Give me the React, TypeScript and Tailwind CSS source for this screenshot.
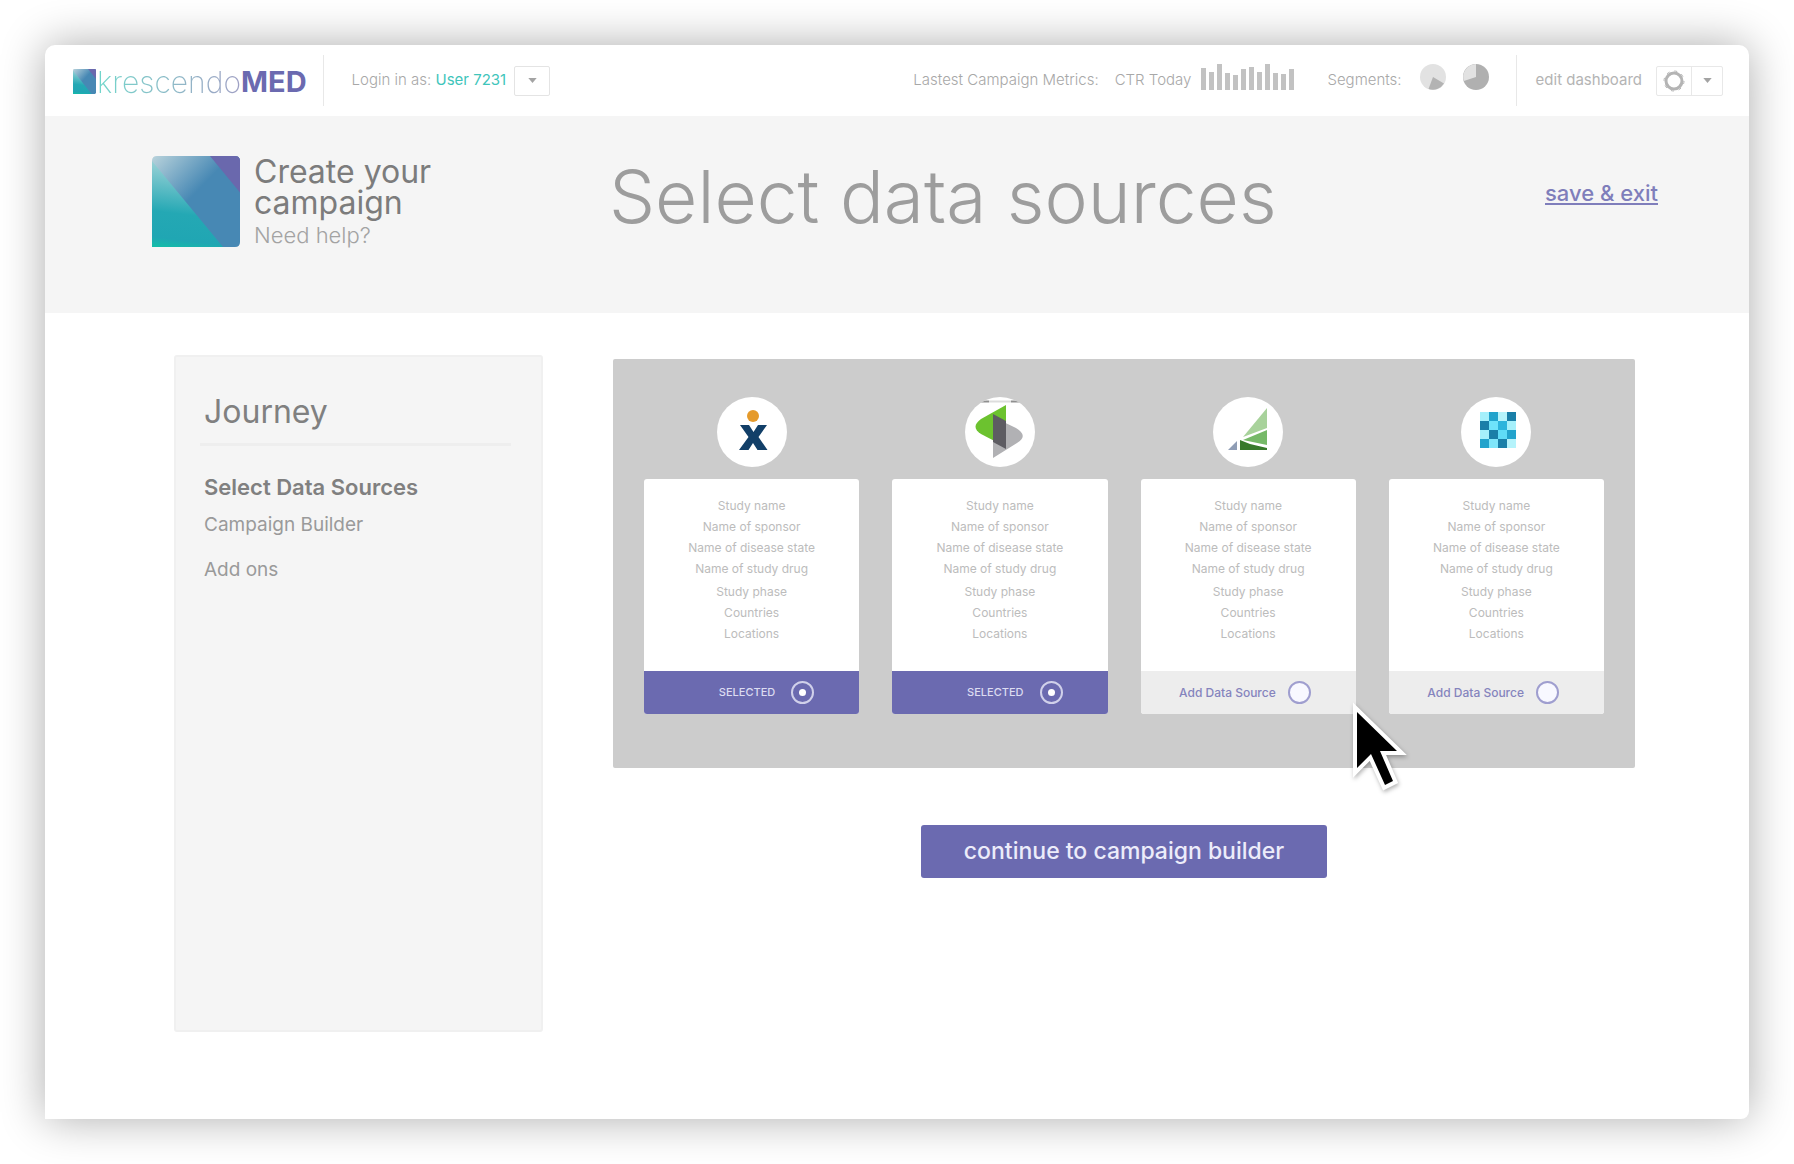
import type { ReactNode } from "react";

const rows = [
  ["Study name", "Name of sponsor", "Name of disease state", "Name of study drug"],
  ["Study phase", "Countries", "Locations"],
];

function PersonLogo() {
  return (
    <svg viewBox="0 0 70 70" className="size-full">
      <circle cx="36" cy="19" r="6" fill="#e59a2b" />
      <path d="M23 28h9l4.500 7 4.500-7h9l-8.500 12 9 13h-10l-4.500-7-4.500 7h-9.500l9.500-13z" fill="#123f68" />
    </svg>
  );
}

function PrismLogo() {
  return (
    <svg viewBox="0 0 70 70" className="size-full">
      <path d="M15 4.500h9M46 4.500h9" stroke="#8f8f8f" strokeWidth="2" />
      <path d="M24 4.500h22" stroke="#dddddd" strokeWidth="2" />
      <path d="M41 8v42L16 37Q5 30 16 22z" fill="#6cc22f" />
      <path d="M28 61V20l23 11Q64 39 52 46z" fill="#b1b1b4" />
      <path d="M28 17l13 7v28L28 45z" fill="#5d5c62" />
    </svg>
  );
}

function SailLogo() {
  return (
    <svg viewBox="0 0 70 70" className="size-full">
      <path d="M54 11v20L30 40z" fill="#a8d29b" />
      <path d="M54 33v15L30 43z" fill="#76b968" />
      <path d="M27 43l10 4 17 4v2H27z" fill="#37792b" />
      <path d="M24 44v9h-9z" fill="#8f9db5" />
    </svg>
  );
}

const tiles = [
  ["#a5f0fb", "#22a3cc", "#b5f3fb", "#1a7fa8"],
  ["#1a7fa8", "#6fe3fa", "#2db4dc", "#a5f0fb"],
  ["#a5f0fb", "#1a7fa8", "#5fdcf7", "#22a3cc"],
  ["#22a3cc", "#7fe6fa", "#1a7fa8", "#b5f3fb"],
];

function TilesLogo() {
  return (
    <svg viewBox="0 0 70 70" className="size-full">
      {tiles.map((line, y) =>
        line.map((fill, x) => (
          <rect key={`${x}-${y}`} x={19 + x * 9} y={15 + y * 9} width="9" height="9" fill={fill} />
        )),
      )}
    </svg>
  );
}

function BrandMark({ className }: { className: string }) {
  return (
    <svg viewBox="0 0 88 90" preserveAspectRatio="none" className={className} aria-hidden="true">
      <defs>
        <linearGradient id="teal" x1="0.3" y1="0" x2="0.2" y2="1">
          <stop offset="0" stopColor="#9fd3d8" />
          <stop offset="0.6" stopColor="#24a8b4" />
          <stop offset="0.9" stopColor="#20a6b3" />
          <stop offset="1" stopColor="#14bba9" />
        </linearGradient>
        <linearGradient id="blue" x1="0" y1="0" x2="0.5" y2="0.5">
          <stop offset="0" stopColor="#b9d3dc" />
          <stop offset="0.9" stopColor="#4788b4" />
        </linearGradient>
        <clipPath id="shape">
          <path d="M5 0h78q5 0 5 5v80q0 5-5 5H0V5q0-5 5-5z" />
        </clipPath>
      </defs>
      <g clipPath="url(#shape)">
        <rect width="88" height="90" fill="url(#blue)" />
        <path d="M0 5l71 85H0z" fill="url(#teal)" />
        <path d="M58 0h30v36z" fill="#6a68ad" />
      </g>
    </svg>
  );
}

function Caret() {
  return (
    <svg viewBox="0 0 10 6" className="h-[5px] w-[9px]" aria-hidden="true">
      <path d="M0 0h10L5 6z" fill="#a3a3a3" />
    </svg>
  );
}

const bars = [22, 18, 26, 17, 15, 21, 23, 18, 26, 17, 16, 21];

function Card({ name, logo, selected }: { name: string; logo: ReactNode; selected: boolean }) {
  return (
    <article className="flex flex-1 flex-col items-center gap-3">
      <div className="size-[70px] overflow-hidden rounded-full bg-white">{logo}</div>
      <div className="w-full overflow-hidden rounded-[3px] bg-white">
        <div className="flex h-[192px] flex-col gap-[2px] pt-4 text-center text-[12px] leading-[21px] text-[#bcbcbc]">
          {rows.map((group) => (
            <div key={group[0]}>
              {group.map((row) => (
                <p key={row}>{row}</p>
              ))}
            </div>
          ))}
        </div>
        <label
          className={
            selected
              ? "flex h-[43px] items-center justify-end gap-4 bg-[#6b6ab0] pr-[45px] text-[11px] font-medium text-[#dcdcf1]"
              : "flex h-[43px] items-center justify-end gap-3 bg-[#ededed] pr-[45px] text-[12px] font-medium text-[#8584bd]"
          }
        >
          {selected ? "SELECTED" : "Add Data Source"}
          <span className="relative grid size-[23px] place-items-center">
            <input
              type="checkbox"
              aria-label={name}
              defaultChecked={selected}
              className={
                selected
                  ? "size-[23px] appearance-none rounded-full border-2 border-[#d0d0ea]"
                  : "size-[23px] appearance-none rounded-full border-2 border-[#9f9ecf] bg-[#f8f8ff]"
              }
            />
            {selected && <span className="absolute size-[7px] rounded-full bg-white" />}
          </span>
        </label>
      </div>
    </article>
  );
}

export default function App() {
  return (
    <div className="min-h-screen bg-white p-[45px] font-['Inter',sans-serif]">
      <div className="overflow-hidden rounded-t-[10px] rounded-br-[8px] bg-white shadow-[0_0_45px_rgba(0,0,0,0.33)]">
        <header className="flex h-[71px] items-center pr-[26px] pl-7 text-[15px] font-light text-[#a8a8a8]">
          <div className="flex items-center pt-[2px]">
            <BrandMark className="h-[25px] w-[23px]" />
            <span className="ml-px bg-linear-to-r from-[#6fd6cb] to-[#9fa0c4] bg-clip-text text-[30px] leading-8 font-extralight text-transparent">
              krescendo
            </span>
            <span className="text-[29px] leading-8 font-bold text-[#6b6ab0]">MED</span>
          </div>
          <div className="ml-4 h-[51px] w-px bg-[#e8e8e8]" />
          <p className="ml-7">
            Login in as: <span className="font-normal text-[#3fc5bb]">User 7231</span>
          </p>
          <button aria-label="Switch user" className="ml-2 grid h-[30px] w-9 place-items-center rounded-[2px] border border-[#e4e4e4]">
            <Caret />
          </button>
          <div className="ml-auto flex items-center">
            <span>Lastest Campaign Metrics:</span>
            <span className="ml-4">CTR Today</span>
            <div className="mb-2 ml-[10px] flex h-[26px] items-end gap-[3px]">
              {bars.map((h, i) => (
                <span key={i} className="w-[5px] bg-[#c2c2c2]" style={{ height: h }} />
              ))}
            </div>
            <span className="ml-[33px]">Segments:</span>
            <svg viewBox="0 0 26 26" className="mb-2 ml-[18px] size-[26px]" aria-hidden="true">
              <circle cx="13" cy="13" r="13" fill="#e2e2e2" />
              <path d="M13 13l11 6.500A13 13 0 0 1 8.500 25z" fill="#b3b3b3" />
            </svg>
            <svg viewBox="0 0 26 26" className="mb-2 ml-[17px] size-[26px]" aria-hidden="true">
              <circle cx="13" cy="13" r="13" fill="#b0b0b0" />
              <path d="M13 13V0A13 13 0 0 0 .8 17z" fill="#e2e2e2" />
            </svg>
            <div className="ml-[27px] h-[51px] w-px bg-[#e8e8e8]" />
            <span className="ml-[19px] font-normal text-[#b4b4b4]">edit dashboard</span>
            <div className="ml-[14px] flex h-[30px] w-[67px] divide-x divide-[#e8e8e8] rounded-[2px] border border-[#e8e8e8]">
              <button aria-label="Dashboard settings" className="grid flex-1 place-items-center">
                <svg viewBox="0 0 22 22" className="size-[22px]" aria-hidden="true">
                  <circle cx="11" cy="11" r="8" fill="none" stroke="#b4b4b4" strokeWidth="3" />
                  <circle cx="11" cy="11" r="10" fill="none" stroke="#b4b4b4" strokeWidth="1" strokeDasharray="3 4.850" />
                </svg>
              </button>
              <button aria-label="Dashboard menu" className="grid w-[30px] place-items-center">
                <Caret />
              </button>
            </div>
          </div>
        </header>

        <section className="flex h-[197px] items-start bg-[#f5f5f5] pr-[91px] pl-[107px]">
          <div className="mt-10 flex w-[457px] shrink-0 gap-[14px]">
            <BrandMark className="h-[91px] w-[88px]" />
            <div className="text-[#7c7c7c]">
              <h2 className="text-[32px] leading-[31px] font-normal">
                Create your
                <br />
                campaign
              </h2>
              <a href="#help" className="mt-[2px] block text-[22px] leading-[30px] font-light text-[#a3a3a3]">
                Need help?
              </a>
            </div>
          </div>
          <h1 className="mt-[37px] text-[73px] leading-[88px] font-light whitespace-nowrap text-[#9d9d9d]">Select data sources</h1>
          <a href="#exit" className="mt-[61px] ml-auto text-[22px] leading-8 font-medium whitespace-nowrap text-[#7f7ebb] underline decoration-2 underline-offset-2">
            save &amp; exit
          </a>
        </section>

        <main className="flex items-start gap-[70px] pt-[42px] pr-[114px] pb-[87px] pl-[129px]">
          <nav aria-label="Journey" className="min-h-[677px] w-[369px] shrink-0 rounded-[3px] border-2 border-[#f0f0f0] bg-[#f5f5f5] pt-[34px] pr-[30px] pl-6">
            <h2 className="border-b-3 border-[#eeeeee] pb-[10px] pl-1 text-[32px] leading-[42px] font-normal text-[#808080]">Journey</h2>
            <ul className="pt-[22px] pl-1 text-[19px] text-[#9a9a9a]">
              <li><a href="#sources" className="block text-[22px] leading-[38px] font-semibold text-[#808080]">Select Data Sources</a></li>
              <li><a href="#builder" className="block leading-[37px]">Campaign Builder</a></li>
              <li><a href="#addons" className="mt-2 block leading-[37px]">Add ons</a></li>
            </ul>
          </nav>

          <div className="relative flex flex-1 flex-col items-center gap-[57px] pt-[4px]">
            <div className="flex w-full gap-[33px] rounded-[2px] bg-[#cccccc] px-[31px] pt-[38px] pb-[54px]">
              <Card name="Source 1" logo={<PersonLogo />} selected />
              <Card name="Source 2" logo={<PrismLogo />} selected />
              <Card name="Source 3" logo={<SailLogo />} selected={false} />
              <Card name="Source 4" logo={<TilesLogo />} selected={false} />
            </div>
            <button className="h-[53px] rounded-[3px] bg-[#6b6ab0] px-[43px] text-[23px] font-medium text-[#ececfa]">
              continue to campaign builder
            </button>
            <svg viewBox="0 0 62 98" className="absolute top-[343px] right-[224px] h-[98px] w-[62px] drop-shadow-[1px_2px_2px_rgba(0,0,0,0.3)]" aria-hidden="true">
              <path d="M8 14v56l14-14 14 31 8-4-13-30h17z" fill="#000" stroke="#fff" strokeWidth="8" style={{ paintOrder: "stroke" }} />
            </svg>
          </div>
        </main>
      </div>
    </div>
  );
}
